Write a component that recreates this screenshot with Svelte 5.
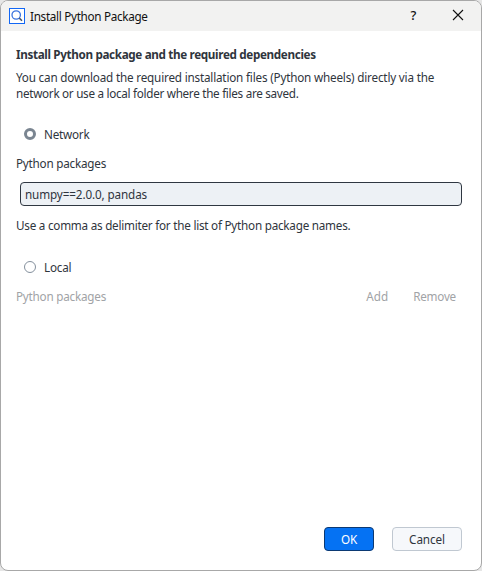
<script>
  let source = $state('network');
  let packages = $state('numpy==2.0.0, pandas');
</script>

<div class="dialog">
  <header>
    <svg class="logo" width="16" height="16" viewBox="0 0 16 16" fill="none">
      <rect x=".5" y=".5" width="15" height="15" fill="#fff" stroke="#1267f5" />
      <circle cx="7.2" cy="7" r="4.2" stroke="#3b74df" stroke-width="1.3" />
      <path d="M10.3 10.1L13 12.8" stroke="#4b5563" stroke-width="1.5" />
    </svg>
    <span class="title">Install Python Package</span>
    <button class="help" aria-label="Help">?</button>
    <button class="close" aria-label="Close">
      <svg width="12" height="12" viewBox="0 0 12 12"><path d="M1 1L11 11M11 1L1 11" stroke="#111" stroke-width="1.1" /></svg>
    </button>
  </header>

  <main>
    <h1>Install Python package and the required dependencies</h1>
    <p class="intro"><span class="l1">You can download the required installation files (Python wheels) directly via the</span><br /><span class="l2">network or use a local folder where the files are saved.</span></p>

    <label class="radio network"><input type="radio" bind:group={source} value="network" /><span>Network</span></label>
    <div class="row caption"><span class="pp">Python packages</span></div>
    <input class="field" type="text" bind:value={packages} />
    <div class="row hint"><span class="ht">Use a comma as delimiter for the list of Python package names.</span></div>

    <label class="radio local"><input type="radio" bind:group={source} value="local" /><span>Local</span></label>
    <div class="row disabled">
      <span class="pp">Python packages</span>
      <button class="add" disabled>Add</button>
      <button class="remove" disabled>Remove</button>
    </div>
  </main>

  <footer>
    <button class="ok">OK</button>
    <button class="cancel">Cancel</button>
  </footer>
</div>

<style>
  :global(body) { background: #e6e6e6; overflow: hidden; }
  .dialog {
    box-sizing: border-box; width: 482px; height: 571px;
    display: flex; flex-direction: column; overflow: hidden;
    border: 1px solid #a8a8a8; border-radius: 8px; background: #fff;
    font: 11.7px/16px "Noto Sans", "Open Sans", sans-serif; color: #2f353d;
  }
  header { display: flex; align-items: center; height: 30px; flex: none; background: #f2f2f1; color: #111; }
  .logo { margin: -1px 5px 0 8px; flex: none; }
  .title { letter-spacing: -.3px; flex: 1; white-space: nowrap; padding-bottom: 1px; }
  button { font: inherit; color: inherit; letter-spacing: inherit; padding: 0; border: 0; background: none; box-sizing: border-box; }
  header button { width: 45px; height: 30px; display: flex; align-items: center; justify-content: center; }
  .help { font-size: 13px; font-weight: 500; padding-bottom: 2px; }
  .close { padding: 0 2px 2px 0; }
  main { flex: 1; display: flex; flex-direction: column; padding: 15px 19px 0 15px; letter-spacing: -.22px; }
  h1 { font-size: 11.7px; line-height: 16px; margin: 0 0 7px; letter-spacing: -.35px; white-space: nowrap; }
  .intro { margin: 0; white-space: nowrap; }
  .l1 { letter-spacing: -.185px; }
  .l2 { letter-spacing: -.29px; }
  .radio { display: flex; align-items: center; height: 16px; padding-left: 8px; gap: 8px; }
  .radio input { appearance: none; box-sizing: border-box; margin: 0; width: 12px; height: 12px; border: 1px solid #84909d; border-radius: 50%; background: #fff; }
  .radio input:checked { border: 3.5px solid #7a8591; }
  .network { margin-top: 25px; }
  .row { display: flex; height: 16px; white-space: nowrap; }
  .caption { margin-top: 13px; }
  .field { box-sizing: border-box; height: 24px; margin: 11px 0 0 4px; padding: 0 4px 1px; border: 1px solid #2f3741; border-radius: 4px; background: #edf1f5; color: #2f353d; font: inherit; letter-spacing: -.12px; outline: none; }
  .hint { margin-top: 11px; }
  .ht { letter-spacing: -.235px; }
  .local { margin-top: 26px; }
  .disabled { margin-top: 13px; color: #a1a3a6; }
  .disabled .pp { flex: 1; }
  .add { margin-right: 25px; letter-spacing: 0; }
  .remove { margin-right: 6px; }
  footer { display: flex; justify-content: flex-end; gap: 18px; padding: 0 19px 19px; letter-spacing: -.1px; }
  footer button { height: 24px; padding-bottom: 1px; border: 1px solid #c0c8d1; border-radius: 4px; background: #f6f8fb; }
  .ok { width: 50px; background: #0572f3; border-color: #0b3973; color: #fff; }
  .cancel { width: 70px; }
</style>
